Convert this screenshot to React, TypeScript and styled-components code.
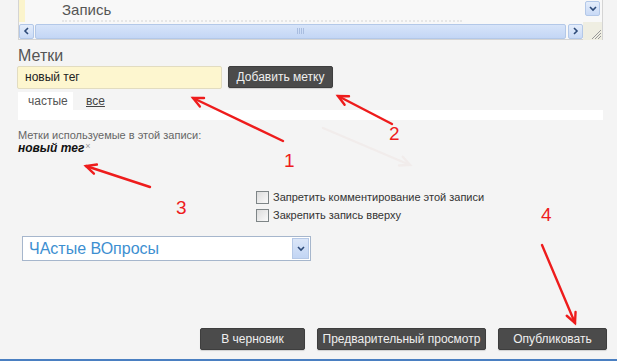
import React from 'react';
import styled, { createGlobalStyle } from 'styled-components';

const GlobalStyle = createGlobalStyle`
  html, body {
    margin: 0;
    padding: 0;
    background: #f4f4f4;
    font-family: 'Liberation Sans', Arial, sans-serif;
  }
`;

const Page = styled.div`
  position: relative;
  width: 617px;
  height: 361px;
  overflow: hidden;
  display: flex;
  flex-direction: column;
  background: #f4f4f4;
  border-bottom: 2px solid #4a7fc1;
  box-sizing: border-box;
`;

const Editor = styled.div`
  margin-left: 18px;
  width: 585px;
  height: 40px;
  display: grid;
  grid-template-columns: 1fr 19px;
  grid-template-rows: 22px 18px;
  background: #f8f8f8;
  border: 1px solid #d4d4d4;
  border-top: none;
  box-sizing: border-box;
`;

const EditorBody = styled.div`
  display: flex;
  border-left: 6px solid #fbf4cc;
  padding-left: 37px;
`;

const EditorText = styled.div`
  font-size: 15px;
  color: #555;
  line-height: 18px;
  padding-top: 1px;
  border-bottom: 2px dotted #e6e6e6;
  width: 400px;
  height: 19px;
`;

const VScroll = styled.div`
  display: flex;
  justify-content: center;
  align-items: flex-start;
  padding-top: 1px;
`;

const HScroll = styled.div`
  display: flex;
  align-items: center;
  gap: 1px;
  height: 16px;
  margin-top: 1px;
`;

const ArrowBtn = styled.div`
  width: 15px;
  height: 15px;
  flex: none;
  box-sizing: border-box;
  border: 1px solid #b3c8e8;
  border-radius: 2px;
  background: linear-gradient(#e4edfb, #c9daf6);
  display: flex;
  align-items: center;
  justify-content: center;
`;

const Thumb = styled.div`
  flex: 1;
  height: 15px;
  box-sizing: border-box;
  border: 1px solid #b3c8e8;
  border-radius: 2px;
  background: linear-gradient(#d7e4f9, #c3d6f5);
  display: flex;
  align-items: center;
  justify-content: center;
  margin-right: 1px;
`;

const Grip = styled.div`
  width: 8px;
  height: 6px;
  background: repeating-linear-gradient(90deg, #a9bde0 0 1px, transparent 1px 2px);
`;

const Corner = styled.div`
  background: #efeee2;
  display: flex;
  align-items: flex-end;
  justify-content: flex-end;
`;

const Section = styled.div`
  margin-left: 18px;
`;

const Heading = styled.div`
  font-size: 16px;
  color: #555;
  line-height: 18px;
  margin-top: 7px;
`;

const InputRow = styled.div`
  display: flex;
  align-items: flex-start;
  gap: 6px;
  margin-top: 1px;
  margin-left: -1px;
`;

const TagInput = styled.div`
  width: 205px;
  height: 23px;
  box-sizing: border-box;
  background: #fdf6cf;
  border: 1px solid #e2dcc0;
  border-radius: 2px;
  font-size: 12px;
  color: #222;
  line-height: 21px;
  padding-left: 7px;
`;

const DarkButton = styled.div<{ $w: number }>`
  width: ${p => p.$w}px;
  height: 22px;
  box-sizing: border-box;
  background: #4b4b4b;
  border: 1px solid #3e3e3e;
  color: #efefef;
  font-size: 12px;
  line-height: 20px;
  text-align: center;
  border-radius: 2px;
  box-shadow: 0 1px 1px rgba(0, 0, 0, 0.15);
`;

const Tabs = styled.div`
  display: flex;
  margin-top: 3px;
  height: 18px;
`;

const Tab = styled.div<{ $active?: boolean }>`
  font-size: 12px;
  line-height: 18px;
  width: ${p => (p.$active ? '55px' : 'auto')};
  box-sizing: border-box;
  background: ${p => (p.$active ? '#fff' : 'transparent')};
  color: ${p => (p.$active ? '#555' : '#444')};
  text-decoration: ${p => (p.$active ? 'none' : 'underline')};
  padding-left: ${p => (p.$active ? '10px' : '13px')};
`;

const TabPanel = styled.div`
  width: 585px;
  height: 10px;
  background: #fff;
`;

const UsedLabel = styled.div`
  font-size: 11px;
  color: #666;
  margin-top: 9px;
  line-height: 12px;
`;

const UsedTag = styled.div`
  display: flex;
  align-items: flex-start;
  font-size: 12px;
  font-weight: bold;
  font-style: italic;
  color: #111;
  line-height: 13px;
  margin-top: 1px;
`;

const Remove = styled.span`
  font-size: 9px;
  line-height: 9px;
  font-weight: normal;
  font-style: normal;
  color: #999;
  margin-left: 1px;
`;

const Options = styled.div`
  margin-left: 256px;
  margin-top: 35px;
  display: flex;
  flex-direction: column;
  gap: 4px;
`;

const CheckRow = styled.div`
  display: flex;
  align-items: center;
  gap: 4px;
  font-size: 11px;
  color: #333;
  line-height: 14px;
`;

const Box = styled.div`
  width: 13px;
  height: 13px;
  box-sizing: border-box;
  border: 1px solid #7e8587;
  background: linear-gradient(135deg, #dcdcdc, #fafafa);
`;

const Select = styled.div`
  margin-left: 22px;
  margin-top: 14px;
  width: 289px;
  height: 25px;
  box-sizing: border-box;
  border: 1px solid #a6b6cc;
  background: #fff;
  display: flex;
  align-items: center;
  justify-content: space-between;
  padding: 1px;
`;

const SelectText = styled.div`
  font-size: 16px;
  color: #3d8fd1;
  padding-left: 5px;
`;

const SelectBtn = styled.div`
  width: 17px;
  height: 21px;
  box-sizing: border-box;
  border: 1px solid #b5c8e6;
  background: linear-gradient(#dbe6f8, #c2d5f4);
  display: flex;
  align-items: center;
  justify-content: center;
`;

const Actions = styled.div`
  margin-top: auto;
  margin-bottom: 9px;
  margin-left: 200px;
  display: flex;
  gap: 12px;
`;

const Overlay = styled.svg`
  position: absolute;
  left: 0;
  top: 0;
  pointer-events: none;
`;

const Chevron = ({ dir }: { dir: 'left' | 'right' | 'down' }) => {
  const d =
    dir === 'left' ? 'M5 1 L2 4 L5 7' : dir === 'right' ? 'M2 1 L5 4 L2 7' : 'M1 2 L4 5 L7 2';
  return (
    <svg width="8" height="8" viewBox="0 0 8 8">
      <path d={d} fill="none" stroke="#2d4a78" strokeWidth="1.6" />
    </svg>
  );
};

const Arrow = ({ x1, y1, x2, y2, color = '#ee1c1c' }) => {
  const a = Math.atan2(y2 - y1, x2 - x1);
  const l = 11;
  const s = 0.45;
  const p1 = `${x2 - l * Math.cos(a - s)},${y2 - l * Math.sin(a - s)}`;
  const p2 = `${x2 - l * Math.cos(a + s)},${y2 - l * Math.sin(a + s)}`;
  return (
    <g stroke={color} strokeWidth="2.4" fill="none" strokeLinecap="round">
      <line x1={x1} y1={y1} x2={x2} y2={y2} />
      <polyline points={`${p1} ${x2},${y2} ${p2}`} />
    </g>
  );
};

const Num = styled.text`
  fill: #ee1c1c;
  font-size: 19px;
  font-family: 'Liberation Sans', Arial, sans-serif;
`;

export default function App() {
  return (
    <Page>
      <GlobalStyle />
      <Editor>
        <EditorBody>
          <EditorText>Запись</EditorText>
        </EditorBody>
        <VScroll>
          <ArrowBtn>
            <Chevron dir="down" />
          </ArrowBtn>
        </VScroll>
        <HScroll>
          <ArrowBtn>
            <Chevron dir="left" />
          </ArrowBtn>
          <Thumb>
            <Grip />
          </Thumb>
          <ArrowBtn>
            <Chevron dir="right" />
          </ArrowBtn>
        </HScroll>
        <Corner>
          <svg width="10" height="10" viewBox="0 0 10 10">
            <path d="M9 3 L3 9 M9 6 L6 9 M9 0 L0 9" stroke="#999" strokeWidth="1" />
          </svg>
        </Corner>
      </Editor>

      <Section>
        <Heading>Метки</Heading>
        <InputRow>
          <TagInput>новый тег</TagInput>
          <DarkButton $w={105}>Добавить метку</DarkButton>
        </InputRow>
        <Tabs>
          <Tab $active>частые</Tab>
          <Tab>все</Tab>
        </Tabs>
        <TabPanel />
        <UsedLabel>Метки используемые в этой записи:</UsedLabel>
        <UsedTag>
          новый тег<Remove>×</Remove>
        </UsedTag>
      </Section>

      <Options>
        <CheckRow>
          <Box />
          Запретить комментирование этой записи
        </CheckRow>
        <CheckRow>
          <Box />
          Закрепить запись вверху
        </CheckRow>
      </Options>

      <Select>
        <SelectText>ЧАстые ВОпросы</SelectText>
        <SelectBtn>
          <Chevron dir="down" />
        </SelectBtn>
      </Select>

      <Actions>
        <DarkButton $w={105}>В черновик</DarkButton>
        <DarkButton $w={169}>Предварительный просмотр</DarkButton>
        <DarkButton $w={109}>Опубликовать</DarkButton>
      </Actions>

      <Overlay width="617" height="361">
        <Arrow x1={323} y1={128} x2={410} y2={165} color="#f1eceb" />
        <Arrow x1={283} y1={141} x2={193} y2={98} />
        <Arrow x1={392} y1={124} x2={338} y2={96} />
        <Arrow x1={150} y1={187} x2={86} y2={166} />
        <Arrow x1={542} y1={245} x2={575} y2={323} />
        <Num x="284" y="167">1</Num>
        <Num x="389" y="140">2</Num>
        <Num x="176" y="214">3</Num>
        <Num x="541" y="221">4</Num>
      </Overlay>
    </Page>
  );
}
